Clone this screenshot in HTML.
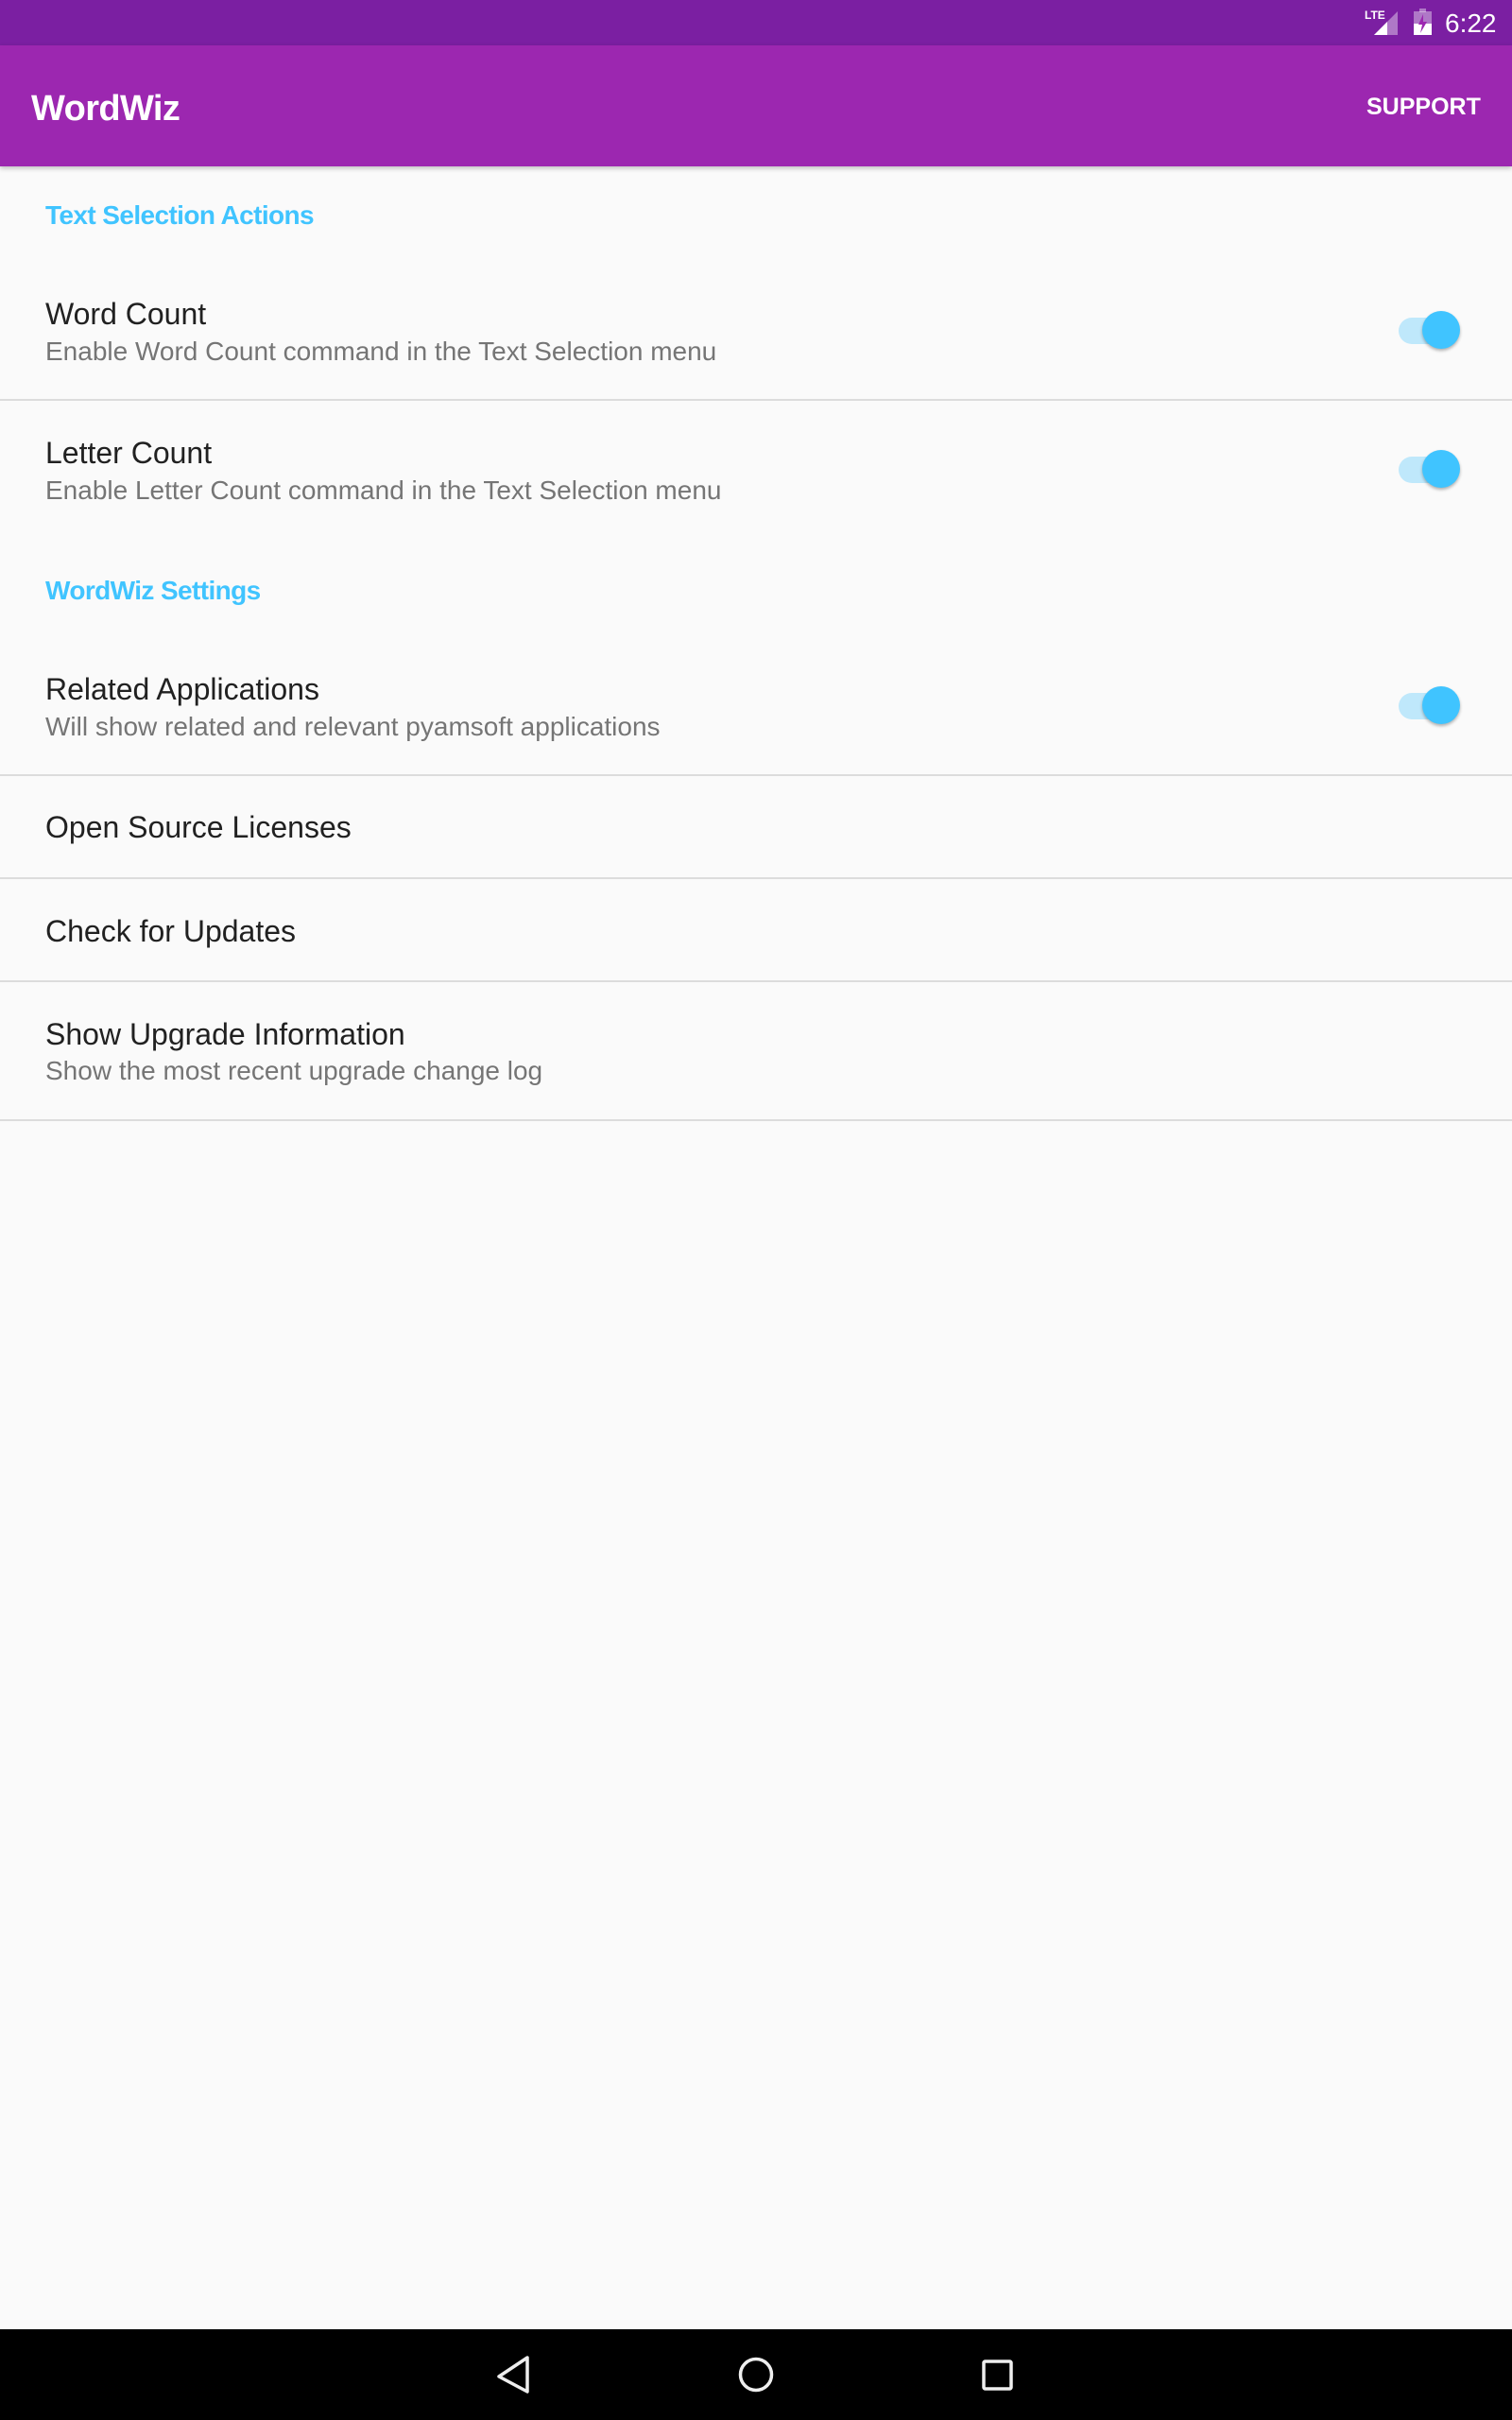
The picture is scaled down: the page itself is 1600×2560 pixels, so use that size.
<!DOCTYPE html>
<html><head><meta charset="utf-8"><style>
*{margin:0;padding:0;box-sizing:border-box}
body{width:1600px;height:2560px;background:#fafafa;font-family:"Liberation Sans",sans-serif;position:relative;overflow:hidden}
.a{position:absolute;line-height:1;white-space:nowrap}
.t{font-size:32px;color:#212121;left:48px}
.s{font-size:28px;color:#757575;left:48px}
.c{font-size:28px;color:#40c4ff;left:48px;font-weight:bold;letter-spacing:-0.6px}
.d{position:absolute;left:0;width:1600px;height:2px;background:#dcdcdc}
.tr{position:absolute;left:1480px;width:64px;height:28px;border-radius:14px;background:#bfe8fb}
.th{position:absolute;left:1505px;width:40px;height:40px;border-radius:50%;background:#40c4ff;box-shadow:0 2px 3px rgba(0,0,0,.3)}
</style></head><body>
<div style="position:absolute;left:0;top:0;width:1600px;height:48px;background:#7b1fa2"></div>
<div style="position:absolute;left:0;top:48px;width:1600px;height:128px;background:#9c27b0;box-shadow:0 2px 5px rgba(0,0,0,.25)"></div>
<div class="a" style="left:33px;top:96px;font-size:38px;color:#fff;font-weight:bold;letter-spacing:-0.6px">WordWiz</div>
<div class="a" style="left:1446px;top:101px;font-size:25px;color:#fff;font-weight:bold">SUPPORT</div>
<div class="a" style="left:1529px;top:11px;font-size:28px;color:#fff">6:22</div>
<svg style="position:absolute;left:1440px;top:8px" width="80" height="32" viewBox="0 0 80 32">
<text x="4" y="12" font-family="Liberation Sans" font-size="12" font-weight="bold" fill="#fff">LTE</text>
<polygon points="39,4 39,29 14,29" fill="#fff" opacity=".4"/>
<polygon points="28,15 28,29 14,29" fill="#fff"/>
<rect x="56" y="4" width="19" height="25" fill="#fff" opacity=".4"/>
<rect x="62" y="1" width="7" height="4" fill="#fff" opacity=".4"/>
<rect x="56" y="17" width="19" height="12" fill="#fff"/>
<polygon points="66,7 61,18 65,18 63,27 70,15 66,15" fill="#9c27b0"/>
</svg>
<div class="a c" style="top:214px">Text Selection Actions</div>
<div class="a t" style="top:316px">Word Count</div>
<div class="a s" style="top:358px">Enable Word Count command in the Text Selection menu</div>
<div class="tr" style="top:336px"></div><div class="th" style="top:329px"></div>
<div class="d" style="top:422px"></div>
<div class="a t" style="top:463px">Letter Count</div>
<div class="a s" style="top:505px">Enable Letter Count command in the Text Selection menu</div>
<div class="tr" style="top:483px"></div><div class="th" style="top:476px"></div>
<div class="a c" style="top:611px">WordWiz Settings</div>
<div class="a t" style="top:713px">Related Applications</div>
<div class="a s" style="top:755px">Will show related and relevant pyamsoft applications</div>
<div class="tr" style="top:733px"></div><div class="th" style="top:726px"></div>
<div class="d" style="top:819px"></div>
<div class="a t" style="top:859px">Open Source Licenses</div>
<div class="d" style="top:928px"></div>
<div class="a t" style="top:969px">Check for Updates</div>
<div class="d" style="top:1037px"></div>
<div class="a t" style="top:1078px">Show Upgrade Information</div>
<div class="a s" style="top:1119px">Show the most recent upgrade change log</div>
<div class="d" style="top:1184px"></div>
<div style="position:absolute;left:0;top:2464px;width:1600px;height:96px;background:#000"></div>
<svg style="position:absolute;left:0;top:2464px" width="1600" height="96">
<polygon points="558,30 528,50 558,66" fill="none" stroke="#eee" stroke-width="3.5" stroke-linejoin="round"/>
<circle cx="800" cy="48" r="16.5" fill="none" stroke="#eee" stroke-width="3.5"/>
<rect x="1041" y="34" width="29" height="29" rx="1.5" fill="none" stroke="#eee" stroke-width="3.5"/>
</svg>
</body></html>
